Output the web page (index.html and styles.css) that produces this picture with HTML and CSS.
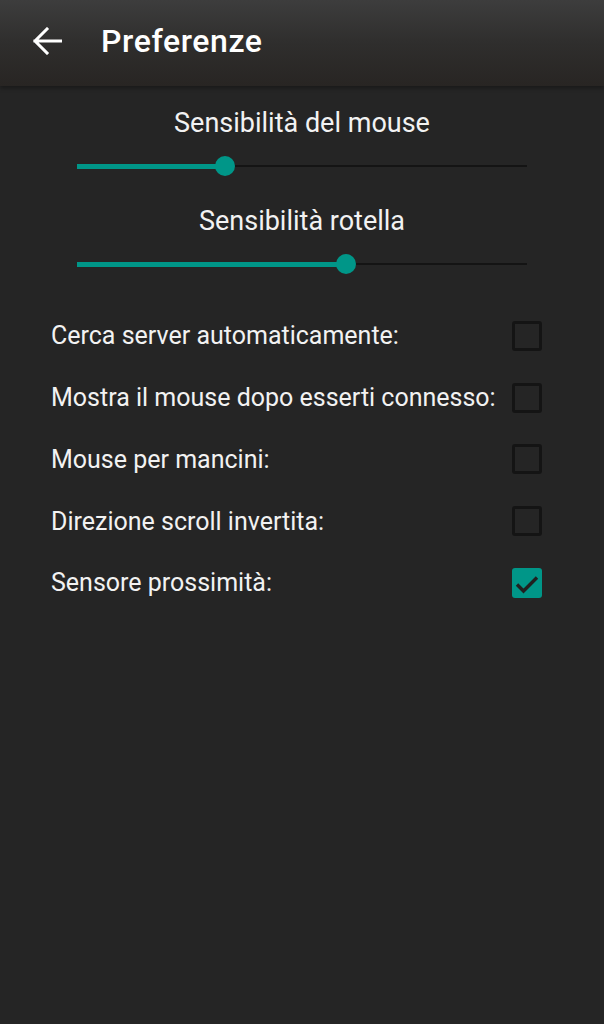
FILE: index.html
```html
<!DOCTYPE html>
<html lang="it">
<head>
<meta charset="utf-8">
<link rel="stylesheet" href="styles.css">
</head>
<body>
<header class="appbar">
  <svg class="back" width="30" height="28" viewBox="0 0 30 28">
    <path d="M29 14 H3 M15 2 L3 14 L15 26" fill="none" stroke="#fff" stroke-width="3" stroke-linecap="square"/>
  </svg>
  <h1 class="title">Preferenze</h1>
</header>
<main class="content">
  <section class="slider-block">
    <div class="slider-label">Sensibilità del mouse</div>
    <div class="slider">
      <div class="track-active" style="width:148px"></div>
      <div class="thumb"></div>
      <div class="track-rest"></div>
    </div>
  </section>
  <section class="slider-block">
    <div class="slider-label">Sensibilità rotella</div>
    <div class="slider">
      <div class="track-active" style="width:269px"></div>
      <div class="thumb"></div>
      <div class="track-rest"></div>
    </div>
  </section>
  <ul class="options">
    <li class="option"><span>Cerca server automaticamente:</span><span class="box"></span></li>
    <li class="option"><span>Mostra il mouse dopo esserti connesso:</span><span class="box"></span></li>
    <li class="option"><span>Mouse per mancini:</span><span class="box"></span></li>
    <li class="option"><span>Direzione scroll invertita:</span><span class="box"></span></li>
    <li class="option"><span>Sensore prossimità:</span><span class="box checked">
      <svg width="30" height="30" viewBox="0 0 30 30"><path d="M5 16.5 L11.5 23 L25 9.5" fill="none" stroke="#202020" stroke-width="3.4"/></svg>
    </span></li>
  </ul>
</main>
</body>
</html>
```
FILE: styles.css
```css
html, body {
  margin: 0;
  padding: 0;
  background: #252525;
  font-family: Roboto, "Noto Sans", sans-serif;
  color: #f2f2f2;
  height: 100%;
}
.appbar {
  height: 86px;
  display: flex;
  align-items: center;
  background: linear-gradient(to bottom, #3d3d3d 0%, #2f2e2d 50%, #282523 100%);
  box-shadow: 0 2px 4px rgba(0,0,0,0.35);
  position: relative;
}
.back {
  margin-left: 32px;
  margin-top: -4px;
  flex: none;
}
.title {
  margin: 0 0 0 39px;
  margin-top: -4px;
  font-size: 32px;
  font-weight: 500;
  color: #fff;
  letter-spacing: 0.6px;
}
.content {
  display: flex;
  flex-direction: column;
}
.slider-block {
  display: flex;
  flex-direction: column;
  padding: 0 77px;
  margin-top: 22px;
  gap: 18px;
}
.slider-block + .slider-block {
  margin-top: 30px;
}
.slider-label {
  text-align: center;
  font-size: 27px;
  line-height: 30px;
  color: #f2f2f2;
}
.slider {
  display: flex;
  align-items: center;
  height: 20px;
}
.track-active {
  height: 5px;
  background: #009688;
  flex: none;
}
.thumb {
  width: 20px;
  height: 20px;
  border-radius: 50%;
  background: #009688;
  margin-left: -10px;
  margin-right: -10px;
  flex: none;
  position: relative;
  z-index: 1;
}
.track-rest {
  flex: 1;
  height: 2px;
  background: #141414;
}
.options {
  list-style: none;
  margin: 31px 0 0 0;
  padding: 0 62px 0 51px;
}
.option {
  display: flex;
  align-items: center;
  justify-content: space-between;
  height: 61.75px;
  font-size: 25px;
  color: #f2f2f2;
}
.box {
  width: 30px;
  height: 30px;
  box-sizing: border-box;
  border: 3px solid #141414;
  border-radius: 3px;
  flex: none;
}
.box.checked {
  border: none;
  background: #009688;
}
.box svg {
  display: block;
}
```
